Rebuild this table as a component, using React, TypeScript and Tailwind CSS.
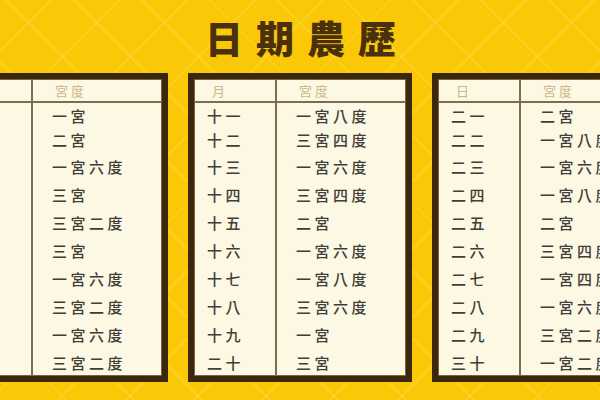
const font = "font-['Noto_Sans_CJK_TC','Noto_Sans_CJK_SC',sans-serif]";

type Row = [string, string];

const tables: { head: string; rows: Row[] }[] = [
  {
    head: "日",
    rows: [
      ["初一", "一宮"],
      ["初二", "二宮"],
      ["初三", "一宮六度"],
      ["初四", "三宮"],
      ["初五", "三宮二度"],
      ["初六", "三宮"],
      ["初七", "一宮六度"],
      ["初八", "三宮二度"],
      ["初九", "一宮六度"],
      ["初十", "三宮二度"],
    ],
  },
  {
    head: "月",
    rows: [
      ["十一", "一宮八度"],
      ["十二", "三宮四度"],
      ["十三", "一宮六度"],
      ["十四", "三宮四度"],
      ["十五", "二宮"],
      ["十六", "一宮六度"],
      ["十七", "一宮八度"],
      ["十八", "三宮六度"],
      ["十九", "一宮"],
      ["二十", "三宮"],
    ],
  },
  {
    head: "日",
    rows: [
      ["二一", "二宮"],
      ["二二", "一宮八度"],
      ["二三", "一宮六度"],
      ["二四", "一宮八度"],
      ["二五", "二宮"],
      ["二六", "三宮四度"],
      ["二七", "一宮四度"],
      ["二八", "一宮六度"],
      ["二九", "三宮二度"],
      ["三十", "一宮二度"],
    ],
  },
];

function Table({ head, rows }: { head: string; rows: Row[] }) {
  return (
    <div className="w-[224px] shrink-0 border-[6px] border-[#3b280c] bg-[#fcf8e3] shadow-[inset_0_0_0_1px_#7a6442]">
      <div className="flex h-[24px] border-b-2 border-[#7c6d51] text-[13px] leading-none tracking-[3px] text-[#cdb68a]">
        <div className="flex w-[83px] shrink-0 items-center border-r-2 border-[#7c6d51] pl-[18px]">
          {head}
        </div>
        <div className="flex flex-1 items-center pl-[22px]">宮度</div>
      </div>
      {rows.map(([day, deg], i) => (
        <div
          key={day}
          className={
            "flex text-[15px] font-medium leading-none tracking-[3.5px] text-[#3f3e39] " +
            (i < 2 ? "h-[24.5px]" : "h-[28px]")
          }
        >
          <div className="flex w-[83px] shrink-0 items-center border-r-2 border-[#7c6d51] pl-[13px]">
            {day}
          </div>
          <div className="flex flex-1 items-center whitespace-nowrap pl-[19px]">{deg}</div>
        </div>
      ))}
    </div>
  );
}

export default function App() {
  return (
    <div
      className={`${font} h-[400px] w-[600px] overflow-hidden bg-[#fac807] bg-[image:repeating-linear-gradient(45deg,transparent_0_46px,rgba(255,226,100,0.28)_46px_48px),repeating-linear-gradient(-45deg,transparent_0_46px,rgba(255,226,100,0.28)_46px_48px)]`}
    >
      <div className="flex h-[73px] items-center justify-center pl-[14px] text-[38px] font-black leading-none tracking-[13px] text-[#4a300d]">
        日期農歷
      </div>
      <div className="flex justify-center gap-[20px]">
        {tables.map((t, i) => (
          <Table key={i} head={t.head} rows={t.rows} />
        ))}
      </div>
    </div>
  );
}
